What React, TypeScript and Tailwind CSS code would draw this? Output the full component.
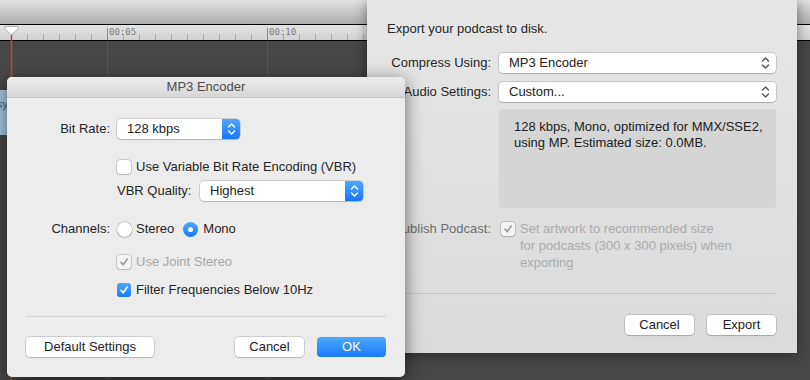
import type { ReactNode } from 'react'

function Chevrons() {
  return (
    <svg width="9" height="14" viewBox="0 0 9 14" fill="none" stroke="currentColor" strokeWidth="1.4" strokeLinecap="round" strokeLinejoin="round">
      <path d="M1.5 5 L4.5 2 L7.5 5" />
      <path d="M1.5 9 L4.5 12 L7.5 9" />
    </svg>
  )
}

function Check({ color }: { color: string }) {
  return (
    <svg width="10" height="10" viewBox="0 0 10 10" fill="none" stroke={color} strokeWidth="1.6" strokeLinecap="round" strokeLinejoin="round">
      <path d="M2 5.3 L4.2 7.8 L8.2 2" />
    </svg>
  )
}

function Popup({ label, className, blue }: { label: string; className: string; blue?: boolean }) {
  return (
    <div className={`flex h-[20px] items-center rounded-[4px] bg-white shadow-[0_0_0_0.5px_rgba(0,0,0,0.25),0_1px_1px_rgba(0,0,0,0.12)] ${className}`}>
      <span className="flex-1 pl-[10px] leading-[20px] text-[#222]">{label}</span>
      {blue ? (
        <span className="flex h-full w-[18px] items-center justify-center rounded-r-[4px] bg-gradient-to-b from-[#4ea8fd] to-[#1577f8] text-white">
          <Chevrons />
        </span>
      ) : (
        <span className="flex pr-[6px] text-[#555]">
          <Chevrons />
        </span>
      )}
    </div>
  )
}

function Checkbox({ checked, disabled }: { checked?: boolean; disabled?: boolean }) {
  if (checked && !disabled) {
    return (
      <span className="flex h-[14px] w-[14px] items-center justify-center rounded-[3px] bg-gradient-to-b from-[#4ea8fd] to-[#1679f9]">
        <Check color="#fff" />
      </span>
    )
  }
  return (
    <span
      className={`flex h-[14px] w-[14px] items-center justify-center rounded-[3px] shadow-[0_0_0_0.5px_rgba(0,0,0,0.3),0_1px_1px_rgba(0,0,0,0.1)] ${
        disabled ? 'bg-[#f4f4f4]' : 'bg-white'
      }`}
    >
      {checked && <Check color="#9a9a9a" />}
    </span>
  )
}

function Radio({ on }: { on?: boolean }) {
  return on ? (
    <span className="flex h-[15px] w-[15px] items-center justify-center rounded-full bg-gradient-to-b from-[#4ea8fd] to-[#1679f9]">
      <span className="h-[5px] w-[5px] rounded-full bg-white" />
    </span>
  ) : (
    <span className="h-[15px] w-[15px] rounded-full bg-white shadow-[0_0_0_0.5px_rgba(0,0,0,0.3),0_1px_1px_rgba(0,0,0,0.12)]" />
  )
}

function Button({ children, className, primary }: { children: ReactNode; className: string; primary?: boolean }) {
  return (
    <div
      className={`flex h-[20px] items-center justify-center rounded-[4px] ${
        primary
          ? 'bg-gradient-to-b from-[#4ea8fd] to-[#1679f9] text-white'
          : 'bg-white text-[#222] shadow-[0_0_0_0.5px_rgba(0,0,0,0.25),0_1px_1px_rgba(0,0,0,0.12)]'
      } ${className}`}
    >
      {children}
    </div>
  )
}

const ticks = Array.from({ length: 51 }, (_, i) => 11 + i * 16)

export default function App() {
  return (
    <div className="relative h-[380px] w-[810px] overflow-hidden bg-[#474747] font-['Liberation_Sans',Arial,sans-serif] text-[13px] text-[#262626]">
      {/* app chrome behind the sheets */}
      <div className="h-[25px] border-b border-black bg-gradient-to-b from-[#e2e2e2] to-[#adadad]" />
      <div className="h-[16px] border-b border-black bg-gradient-to-b from-[#e4e4e4] to-[#d2d2d2]">
        <svg width="810" height="15">
          {ticks.map((x) => {
            const major = (x - 107) % 160 === 0
            return (
              <line key={x} x1={x + 0.5} x2={x + 0.5} y1={major ? 3 : 9} y2={15} stroke={major ? '#8a8a8a' : '#a8a8a8'} strokeWidth="1" />
            )
          })}
          <text x="109" y="10" fontSize="9" fill="#7a7a7a" fontFamily="DejaVu Sans Mono, monospace">00:05</text>
          <text x="269" y="10" fontSize="9" fill="#7a7a7a" fontFamily="DejaVu Sans Mono, monospace">00:10</text>
        </svg>
      </div>
      <div className="flex h-[339px]">
        <div className="ml-[107px] w-px bg-[#575757]" />
        <div className="ml-[159px] w-px bg-[#575757]" />
      </div>

      {/* playhead */}
      <svg className="absolute left-0 top-[25px]" width="24" height="355">
        <line x1="11.5" x2="11.5" y1="6" y2="355" stroke="#c9472d" strokeWidth="1.5" />
        <path d="M5 1.5 H18 V4 L11.5 10 L5 4 Z" fill="#fff" stroke="#9a9a9a" strokeWidth="0.7" />
      </svg>

      {/* clip peeking out on the left */}
      <div className="absolute left-0 top-[90px] flex h-[45px] w-[8px] justify-end overflow-hidden bg-[#a9c6de] pt-[6px] text-[11px] text-[#3a5a78]">
        <span className="whitespace-nowrap">sy</span>
      </div>

      {/* export sheet */}
      <div className="absolute left-[367px] top-0 h-[353px] w-[430px] bg-gradient-to-b from-[#e6e6e6] to-[#dbdbdb] shadow-[0_2px_12px_rgba(0,0,0,0.45)]">
        <div className="pl-[20px] pt-[21px] leading-[16px]">Export your podcast to disk.</div>
        <div className="mt-[16px] grid grid-cols-[124px_277px] items-center gap-x-[8px] gap-y-[9px]">
          <div className="text-right">Compress Using:</div>
          <Popup label="MP3 Encoder" className="w-[277px]" />
          <div className="text-right">Audio Settings:</div>
          <Popup label="Custom..." className="w-[277px]" />
        </div>
        <div className="ml-[132px] mt-[7px] h-[99px] w-[277px] whitespace-nowrap rounded-[2px] bg-[#d5d5d5] pl-[15px] pt-[10px] leading-[16px] text-[#222]">
          128 kbps, Mono, optimized for MMX/SSE2,
          <br />
          using MP. Estimated size: 0.0MB.
        </div>
        <div className="mt-[12px] flex">
          <div className="w-[124px] text-right leading-[17px] text-[#6f6f6f]">Publish Podcast:</div>
          <div className="ml-[10px] mt-[2px]">
            <Checkbox checked disabled />
          </div>
          <div className="ml-[5px] whitespace-nowrap leading-[17px] text-[#ababab]">
            Set artwork to recommended size
            <br />
            for podcasts (300 x 300 pixels) when
            <br />
            exporting
          </div>
        </div>
        <div className="ml-[20px] mr-[21px] mt-[22px] h-px bg-[#c6c6c6]" />
        <div className="mr-[21px] mt-[21px] flex justify-end gap-[13px]">
          <Button className="w-[69px]">Cancel</Button>
          <Button className="w-[69px]">Export</Button>
        </div>
      </div>

      {/* MP3 encoder dialog */}
      <div className="absolute left-[7px] top-[77px] h-[300px] w-[398px] overflow-hidden rounded-[5px] bg-[#ececec] shadow-[0_4px_18px_rgba(0,0,0,0.55)]">
        <div className="flex h-[21px] items-center justify-center border-b border-[#c4c4c4] bg-gradient-to-b from-[#ececec] to-[#d7d7d7] text-[#4d4d4d]">
          MP3 Encoder
        </div>
        <div className="mt-[21px] flex items-center">
          <div className="mr-[7px] w-[103px] text-right">Bit Rate:</div>
          <Popup label="128 kbps" className="w-[123px]" blue />
        </div>
        <div className="ml-[110px] mt-[18px] flex h-[20px] items-center gap-[5px]">
          <Checkbox />
          <span>Use Variable Bit Rate Encoding (VBR)</span>
        </div>
        <div className="ml-[110px] mt-[4px] flex items-center">
          <span className="w-[83px]">VBR Quality:</span>
          <Popup label="Highest" className="w-[163px]" blue />
        </div>
        <div className="mt-[18px] flex h-[20px] items-center">
          <div className="mr-[7px] w-[103px] text-right">Channels:</div>
          <Radio />
          <span className="ml-[4px]">Stereo</span>
          <span className="ml-[9px]">
            <Radio on />
          </span>
          <span className="ml-[5px]">Mono</span>
        </div>
        <div className="ml-[110px] mt-[13px] flex h-[20px] items-center gap-[5px] text-[#a6a6a6]">
          <Checkbox checked disabled />
          <span>Use Joint Stereo</span>
        </div>
        <div className="ml-[110px] mt-[8px] flex h-[20px] items-center gap-[5px]">
          <Checkbox checked />
          <span>Filter Frequencies Below 10Hz</span>
        </div>
        <div className="mx-[19px] mt-[16px] h-px bg-[#d2d2d2]" />
        <div className="mx-[19px] mt-[20px] flex">
          <Button className="w-[128px]">Default Settings</Button>
          <div className="flex-1" />
          <Button className="w-[69px]">Cancel</Button>
          <Button className="ml-[13px] w-[69px]" primary>
            OK
          </Button>
        </div>
      </div>
    </div>
  )
}
